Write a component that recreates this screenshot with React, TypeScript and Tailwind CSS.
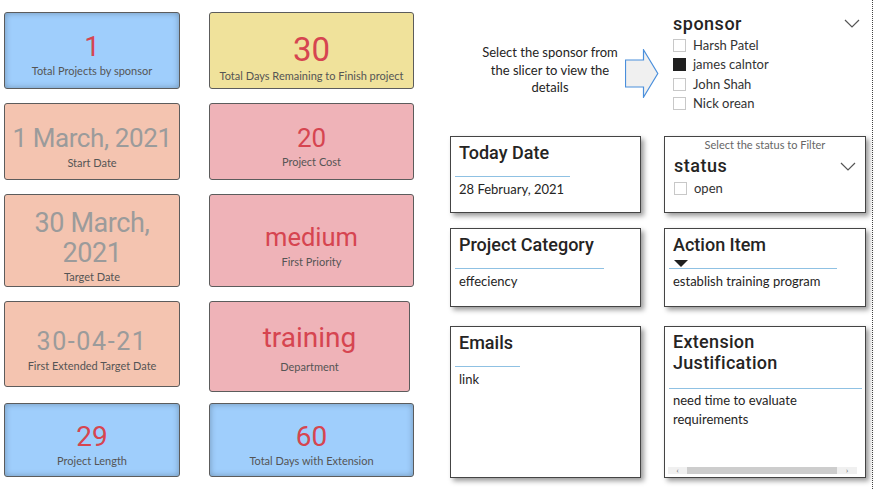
import React from "react";

const DIN = { fontFamily: "Roboto, 'DejaVu Sans', sans-serif" };
const SEG = { fontFamily: "Lato, 'Open Sans', sans-serif" };

function Card({
  w,
  h,
  bg,
  pt,
  children,
  blue,
}: {
  w: string;
  h: string;
  bg: string;
  pt: string;
  children: React.ReactNode;
  blue?: boolean;
}) {
  return (
    <div
      className={`${w} ${h} ${bg} ${pt} border border-[#5c5c5c] rounded-[3px] flex flex-col items-center ${
        blue ? "shadow-[inset_0_0_6px_rgba(0,0,0,0.28)]" : ""
      }`}
    >
      {children}
    </div>
  );
}

function Label({ mt, children }: { mt: string; children: React.ReactNode }) {
  return (
    <div className={`${mt} text-[11px] leading-[14px] text-[#555555] whitespace-nowrap`} style={SEG}>
      {children}
    </div>
  );
}

function Chevron() {
  return (
    <svg width="16" height="9" viewBox="0 0 16 9">
      <polyline points="1,1 8,8 15,1" fill="none" stroke="#555" strokeWidth="1.2" />
    </svg>
  );
}

function Check({ on }: { on?: boolean }) {
  return (
    <div
      className={`w-[13px] h-[13px] border ${
        on ? "bg-[#1f1f1f] border-[#1f1f1f]" : "bg-white border-[#c8c8c8]"
      }`}
    />
  );
}

function Box({ w, h, children }: { w: string; h: string; children: React.ReactNode }) {
  return (
    <div
      className={`${w} ${h} bg-white border border-[#444] shadow-[3px_3px_5px_rgba(0,0,0,0.4)] relative`}
    >
      {children}
    </div>
  );
}

export default function App() {
  return (
    <div className="w-[875px] h-[489px] bg-white flex overflow-hidden">
      {/* Left cards */}
      <div className="w-[450px] pl-[4px] pt-[12px] flex flex-col">
        <div className="flex gap-[29px]">
          <Card w="w-[176px]" h="h-[77px]" bg="bg-[#9fcefc]" pt="pt-[20px]" blue>
            <div className="text-[28px] leading-[28px] text-[#d64550]" style={DIN}>
              1
            </div>
            <Label mt="mt-[3px]">Total Projects by sponsor</Label>
          </Card>
          <Card w="w-[205px]" h="h-[77px]" bg="bg-[#f0e29b]" pt="pt-[20px]">
            <div className="text-[33px] leading-[33px] text-[#d64550]" style={DIN}>
              30
            </div>
            <Label mt="mt-[3px]">Total Days Remaining to Finish project</Label>
          </Card>
        </div>
        <div className="flex gap-[29px] mt-[14px]">
          <Card w="w-[176px]" h="h-[77px]" bg="bg-[#f4c4b0]" pt="pt-[21px]">
            <div
              className="text-[26px] leading-[26px] text-[#9b9b9b] tracking-[-0.4px] whitespace-nowrap"
              style={DIN}
            >
              1 March, 2021
            </div>
            <Label mt="mt-[5px]">Start Date</Label>
          </Card>
          <Card w="w-[205px]" h="h-[77px]" bg="bg-[#efb3b8]" pt="pt-[21px]">
            <div className="text-[26px] leading-[26px] text-[#d64550]" style={DIN}>
              20
            </div>
            <Label mt="mt-[4px]">Project Cost</Label>
          </Card>
        </div>
        <div className="flex gap-[29px] mt-[14px]">
          <Card w="w-[176px]" h="h-[93px]" bg="bg-[#f4c4b0]" pt="pt-[13px]">
            <div
              className="text-[27px] leading-[30px] text-[#9b9b9b] tracking-[-0.4px] text-center"
              style={DIN}
            >
              30 March,
              <br />
              2021
            </div>
            <Label mt="mt-[2px]">Target Date</Label>
          </Card>
          <Card w="w-[205px]" h="h-[93px]" bg="bg-[#efb3b8]" pt="pt-[30px]">
            <div className="text-[25.5px] leading-[25.5px] text-[#d64550]" style={DIN}>
              medium
            </div>
            <Label mt="mt-[4px]">First Priority</Label>
          </Card>
        </div>
        <div className="flex gap-[29px] mt-[14px] items-start h-[91px]">
          <Card w="w-[176px]" h="h-[86px]" bg="bg-[#f4c4b0]" pt="pt-[27px]">
            <div className="text-[25px] leading-[25px] text-[#9b9b9b] tracking-[1.6px]" style={DIN}>
              30-04-21
            </div>
            <Label mt="mt-[5px]">First Extended Target Date</Label>
          </Card>
          <Card w="w-[201px]" h="h-[91px]" bg="bg-[#efb3b8]" pt="pt-[22px]">
            <div className="text-[28px] leading-[28px] text-[#d64550]" style={DIN}>
              training
            </div>
            <Label mt="mt-[8px]">Department</Label>
          </Card>
        </div>
        <div className="flex gap-[29px] mt-[11px]">
          <Card w="w-[176px]" h="h-[74px]" bg="bg-[#9fcefc]" pt="pt-[19px]" blue>
            <div className="text-[28px] leading-[28px] text-[#d64550]" style={DIN}>
              29
            </div>
            <Label mt="mt-[3px]">Project Length</Label>
          </Card>
          <Card w="w-[205px]" h="h-[74px]" bg="bg-[#9fcefc]" pt="pt-[19px]" blue>
            <div className="text-[28px] leading-[28px] text-[#d64550]" style={DIN}>
              60
            </div>
            <Label mt="mt-[3px]">Total Days with Extension</Label>
          </Card>
        </div>
      </div>

      {/* Right area */}
      <div className="w-[423px] h-[489px] border-r border-dotted border-[#444] flex flex-col">
        <div className="h-[136px] flex">
          <div
            className="w-[170px] ml-[15px] mt-[44px] text-center text-[13px] leading-[17.5px] text-[#252423]"
            style={SEG}
          >
            Select the sponsor from
            <br />
            the slicer to view the
            <br />
            details
          </div>
          <svg width="34" height="49" viewBox="0 0 34 49" className="ml-[-10px] mt-[49px]">
            <polygon
              points="0.5,11 18.5,11 18.5,0.8 32.8,24.5 18.5,48.2 18.5,38 0.5,38"
              fill="#f0f0f0"
              stroke="#4a8fdc"
              strokeWidth="1.2"
            />
          </svg>
          <div className="ml-[14px] w-[193px] pt-[12px]">
            <div className="flex items-center justify-between h-[22px] pr-[6px]">
              <div className="text-[18px] font-medium text-[#252423] tracking-[0.5px]" style={DIN}>
                sponsor
              </div>
              <Chevron />
            </div>
            <div className="flex flex-col mt-[2px]">
              {[
                ["Harsh Patel", false],
                ["james calntor", true],
                ["John Shah", false],
                ["Nick orean", false],
              ].map(([n, on]) => (
                <div key={n as string} className="flex items-center h-[19.3px] gap-[7px]">
                  <Check on={on as boolean} />
                  <div className="text-[13px] text-[#333]" style={SEG}>
                    {n as string}
                  </div>
                </div>
              ))}
            </div>
          </div>
        </div>

        <div className="flex gap-[23px]">
          <div className="flex flex-col">
            <Box w="w-[191px]" h="h-[77px]">
              <div className="pl-[8px] pt-[4px] text-[18px] leading-[24px] font-medium text-[#252423]" style={DIN}>
                Today Date
              </div>
              <div className="ml-[4px] mt-[11px] w-[115px] h-px bg-[#8fc1e3]" />
              <div className="pl-[8px] mt-[3px] text-[13px] leading-[18px] text-[#252423]" style={SEG}>
                28 February, 2021
              </div>
            </Box>
            <div className="mt-[15px]">
              <Box w="w-[191px]" h="h-[79px]">
                <div className="pl-[8px] pt-[4px] text-[18px] leading-[24px] font-medium text-[#252423]" style={DIN}>
                  Project Category
                </div>
                <div className="ml-[4px] mt-[11px] w-[149px] h-px bg-[#8fc1e3]" />
                <div className="pl-[8px] mt-[3px] text-[13px] leading-[18px] text-[#252423]" style={SEG}>
                  effeciency
                </div>
              </Box>
            </div>
            <div className="mt-[19px]">
              <Box w="w-[191px]" h="h-[152px]">
                <div className="pl-[8px] pt-[4px] text-[18px] leading-[24px] font-medium text-[#252423]" style={DIN}>
                  Emails
                </div>
                <div className="ml-[4px] mt-[11px] w-[65px] h-px bg-[#8fc1e3]" />
                <div className="pl-[8px] mt-[3px] text-[13px] leading-[18px] text-[#252423]" style={SEG}>
                  link
                </div>
              </Box>
            </div>
          </div>

          <div className="flex flex-col">
            <Box w="w-[202px]" h="h-[77px]">
              <div className="text-center text-[11px] leading-[14px] text-[#666] mt-[1px]" style={SEG}>
                Select the status to Filter
              </div>
              <div className="flex items-center justify-between pl-[9px] pr-[9px] mt-[3px]">
                <div className="text-[18px] leading-[22px] font-medium text-[#252423] tracking-[0.5px]" style={DIN}>
                  status
                </div>
                <Chevron />
              </div>
              <div className="flex items-center gap-[7px] pl-[9px] mt-[2px]">
                <Check />
                <div className="text-[13px] leading-[18px] text-[#333]" style={SEG}>
                  open
                </div>
              </div>
            </Box>
            <div className="mt-[15px]">
              <Box w="w-[202px]" h="h-[79px]">
                <div className="pl-[8px] pt-[4px] text-[18px] leading-[24px] font-medium text-[#252423]" style={DIN}>
                  Action Item
                </div>
                <svg width="14" height="8" viewBox="0 0 14 8" className="ml-[9px] mt-[3px]">
                  <polygon points="0,0 14,0 7,7" fill="#1f1f1f" />
                </svg>
                <div className="ml-[4px] w-[168px] h-px bg-[#8fc1e3]" />
                <div className="pl-[8px] mt-[3px] text-[13px] leading-[18px] text-[#252423]" style={SEG}>
                  establish training program
                </div>
              </Box>
            </div>
            <div className="mt-[19px]">
              <Box w="w-[202px]" h="h-[152px]">
                <div className="pl-[8px] pt-[4px] text-[18px] leading-[21px] font-medium text-[#252423] tracking-[0.3px]" style={DIN}>
                  Extension
                  <br />
                  Justification
                </div>
                <div className="ml-[4px] mt-[15px] w-[193px] h-px bg-[#8fc1e3]" />
                <div className="pl-[8px] mt-[2px] text-[13px] leading-[19px] text-[#252423]" style={SEG}>
                  need time to evaluate
                  <br />
                  requirements
                </div>
                <div className="absolute left-[3px] bottom-[3px] w-[189px] h-[7px] bg-[#f0f0f0] flex items-center">
                  <div className="w-[19px] flex justify-center text-[7px] leading-[7px] text-[#777]">‹</div>
                  <div className="w-[150px] h-[7px] bg-[#cdcdcd]" />
                  <div className="w-[20px] flex justify-center text-[7px] leading-[7px] text-[#777]">›</div>
                </div>
              </Box>
            </div>
          </div>
        </div>
      </div>
    </div>
  );
}
